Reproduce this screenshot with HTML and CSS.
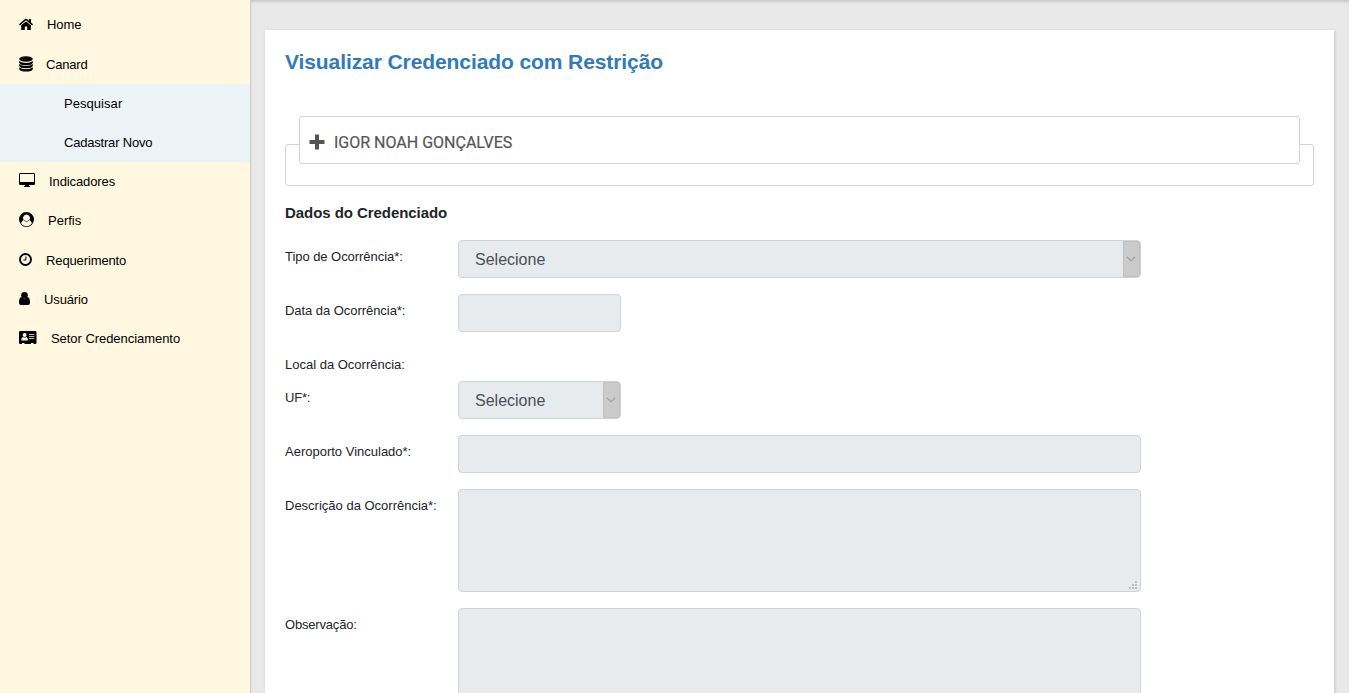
FILE: index.html
```html
<!DOCTYPE html>
<html lang="pt-BR">
<head>
<meta charset="utf-8">
<title>Visualizar Credenciado com Restrição</title>
<link rel="stylesheet" href="styles.css">
</head>
<body>
<div class="layout">
  <nav class="sidebar">
    <a class="item home"><svg width="14" height="13" viewBox="0 0 14 13"><path d="M7 3.400 2.200 7.300V11.500Q2.200 12 2.700 12H5.800V8.600H8.200V12H11.300Q11.800 12 11.800 11.500V7.300Z"/><path d="M.5 6.900 6.500 1.700Q7 1.300 7.500 1.700L13.500 6.900" fill="none" stroke="#000" stroke-width="1.500"/><path d="M9.900 1H12V5.400L9.900 3.500Z"/></svg><span>Home</span></a>
    <a class="item canard"><svg width="14" height="16" viewBox="0 0 14 16"><ellipse cx="7" cy="3" rx="6.8" ry="2.8"/><path d="M.2 5Q2.5 7 7 7T13.800 5V6.700Q13 9.200 7 9.200T.2 6.700ZM.2 8.100Q2.500 10.100 7 10.100T13.800 8.100V9.700Q13 12.200 7 12.200T.2 9.700ZM.2 11.200Q2.500 13.200 7 13.200T13.800 11.200V12.900Q13 15.500 7 15.500T.2 12.900Z"/></svg><span>Canard</span></a>
    <div class="submenu">
      <a class="subitem"><span class="pesquisar">Pesquisar</span></a>
      <a class="subitem"><span class="cadastrar">Cadastrar Novo</span></a>
    </div>
    <a class="item indicadores"><svg width="16" height="14" viewBox="0 0 16 14"><path fill-rule="evenodd" d="M1.300 0H14.700Q16 0 16 1.300V10.700Q16 12 14.700 12H10V13L11 13.200V14H5V13.200L6 13V12H1.300Q0 12 0 10.700V1.300Q0 0 1.300 0ZM1 1V9H15V1Z"/></svg><span>Indicadores</span></a>
    <a class="item perfis"><svg width="15" height="15" viewBox="0 0 15 15"><path fill-rule="evenodd" d="M7.500 0A7.500 7.500 0 1 1 7.500 15A7.500 7.500 0 0 1 7.500 0ZM7.500 2.600A3.300 3.500 0 0 0 4.600 7.900Q2.700 8.700 2.100 11.300A6.500 6.500 0 0 0 12.900 11.300Q12.300 8.700 10.400 7.900A3.300 3.500 0 0 0 7.500 2.600Z"/><path d="M4.700 8.200Q7.500 11.200 10.300 8.200" fill="none" stroke="#000" stroke-width=".6"/></svg><span>Perfis</span></a>
    <a class="item requerimento"><svg width="13" height="13" viewBox="0 0 13 13"><circle cx="6.500" cy="6.500" r="5.500" fill="none" stroke="#000" stroke-width="1.900"/><path d="M6.900 3.400V7H4.400" fill="none" stroke="#000" stroke-width="1"/></svg><span>Requerimento</span></a>
    <a class="item usuario"><svg width="11" height="13" viewBox="0 0 11 13"><ellipse cx="5.500" cy="3.300" rx="3.300" ry="3.300"/><path d="M2.100 5.100Q5.500 8 8.900 5.100Q11 6 11 10.700Q11 13 9 13H2Q0 13 0 10.700Q0 6 2.100 5.100Z"/></svg><span>Usuário</span></a>
    <a class="item setor"><svg width="18" height="13" viewBox="0 0 18 13"><path d="M1.300 0H16.200Q17.500 0 17.500 1.300V11.700Q17.500 13 16.200 13H14.500V12H12V13H5.500V12H3V13H1.300Q0 13 0 11.700V1.300Q0 0 1.300 0Z"/><g fill="#fff5dc"><circle cx="5.600" cy="4.100" r="2"/><path d="M2.300 9.600Q2.200 6.300 4 5.900Q5.600 7 7.200 5.900Q9 6.300 8.900 9.600Z"/><path d="M10 3H15.300V4H10ZM10 5H15.300V6H10ZM10 7H15.300V8H10Z" opacity=".75"/></g></svg><span>Setor Credenciamento</span></a>
  </nav>
  <main class="content">
    <section class="card">
      <h1>Visualizar Credenciado com Restrição</h1>
      <div class="person">
        <div class="legend"><svg width="16" height="16" viewBox="0 0 16 16"><path d="M6 .5H10V6H15.500V10H10V15.500H6V10H.5V6H6Z" fill="#555"/></svg><span>IGOR NOAH GONÇALVES</span></div>
      </div>
      <h2>Dados do Credenciado</h2>
      <form class="form">
        <div class="row"><label><span class="tight">Tipo de Ocorrência*:</span></label><div class="control select wide"><span>Selecione</span><i class="arrow"><svg width="10" height="6" viewBox="0 0 10 6"><path d="M1 .8 5 4.800 9 .8"/></svg></i></div></div>
        <div class="row"><label><span class="tight">Data da Ocorrência*:</span></label><div class="control"></div></div>
        <div class="row place"><label><span>Local da Ocorrência:</span></label></div>
        <div class="row"><label><span class="tighter">UF*:</span></label><div class="control select"><span>Selecione</span><i class="arrow"><svg width="10" height="6" viewBox="0 0 10 6"><path d="M1 .8 5 4.800 9 .8"/></svg></i></div></div>
        <div class="row"><label><span>Aeroporto Vinculado*:</span></label><div class="control wide"></div></div>
        <div class="row"><label><span>Descrição da Ocorrência*:</span></label><div class="control wide area"><svg class="grip" width="8" height="8" viewBox="0 0 8 8"><path d="M6 0h2v2h-2zM3 3h2v2h-2zM6 3h2v2h-2zM0 6h2v2h-2zM3 6h2v2h-2zM6 6h2v2h-2z"/></svg></div></div>
        <div class="row"><label><span class="tighter">Observação:</span></label><div class="control wide area"></div></div>
      </form>
    </section>
  </main>
</div>
</body>
</html>
```
FILE: styles.css
```css
* { box-sizing: border-box; }
body { margin: 0; height: 693px; overflow: hidden; font: 13px/20px "Liberation Sans", Arial, sans-serif; color: #212529; }
.layout { display: flex; height: 693px; overflow: hidden; }
.sidebar { width: 251px; flex: none; padding-top: 5px; background: #fff7df; border-right: 1px solid #ccc; color: #000; }
.item { display: flex; align-items: center; height: 39.25px; padding-left: 19px; gap: 14px; white-space: nowrap; }
.item svg { flex: none; }
.home { letter-spacing: -.1px; }
.home svg { margin-top: -1px; }
.canard { height: 39.75px; padding-top: 1px; gap: 13px; letter-spacing: -.2px; }
.canard svg { margin-top: -2px; }
.indicadores { letter-spacing: -.1px; }
.indicadores svg { margin-top: -4px; }
.perfis svg { margin-top: -2px; }
.requerimento, .usuario { padding-top: 1px; letter-spacing: -.12px; }
.requerimento svg, .usuario svg { margin-top: -2px; }
.setor { letter-spacing: -.05px; gap: 14px; }
.setor svg { margin-top: -2px; }
.submenu { background: #ecf4f8; }
.subitem { display: flex; align-items: center; height: 39px; padding-left: 64px; }
.pesquisar { letter-spacing: .05px; }
.cadastrar { letter-spacing: -.2px; }
.content { flex: 1; height: 693px; padding: 30px 15px 0 14px; background: #e9e9e9; box-shadow: inset 0 3px 3px -1px #c8c8c8; }
.card { height: 663px; overflow: hidden; background: #fff; padding: 18px 20px 0; box-shadow: 1px 1px 3px #c4c4c4; }
h1 { margin: 0; font-size: 21px; line-height: 28px; letter-spacing: -.09px; color: #337ab7; white-space: nowrap; }
h2 { margin: 17px 0 0; font-size: 15px; line-height: 20px; letter-spacing: -.06px; white-space: nowrap; }
.person { margin: 68px 0 0; height: 42px; border: 1px solid #d3d3d3; border-radius: 3px; padding: 0 13px; }
.legend { display: flex; align-items: center; width: 1001px; height: 48px; margin-top: -29px; padding: 5px 9px 0; gap: 9px; border: 1px solid #d3d3d3; border-radius: 3px; background: #fff; color: #555; font: 400 16px/20px Roboto, sans-serif; letter-spacing: 0; -webkit-text-stroke: .2px #555; }
.legend svg { margin-top: -1px; }
.form { display: flex; flex-direction: column; gap: 16px; margin-top: 17px; }
.row { display: flex; align-items: flex-start; flex: none; }
.row label { width: 173px; flex: none; padding-top: 7px; white-space: nowrap; }
.tight { letter-spacing: -.05px; }
.tighter { letter-spacing: -.18px; }
.place { height: 17px; }
.control { position: relative; width: 163px; height: 38px; background: #e8ebee; border: 1px solid #ced4da; border-radius: 4px; font-size: 16px; color: #495057; }
.wide { width: 683px; }
.area { height: 103px; }
.select { display: flex; align-items: center; justify-content: space-between; padding-left: 16px; }
.select span { padding-top: 2px; }
.arrow { display: flex; align-items: center; justify-content: center; width: 17px; height: 36px; padding-right: 1px; background: #cbcbcb; border: 1px solid #bfbfbf; border-radius: 0 3px 3px 0; }
.arrow svg { flex: none; }
.arrow path { fill: none; stroke: #999; stroke-width: 1.1; }
.grip { position: absolute; right: 3px; bottom: 2px; fill: #bdbdbd; }
```
